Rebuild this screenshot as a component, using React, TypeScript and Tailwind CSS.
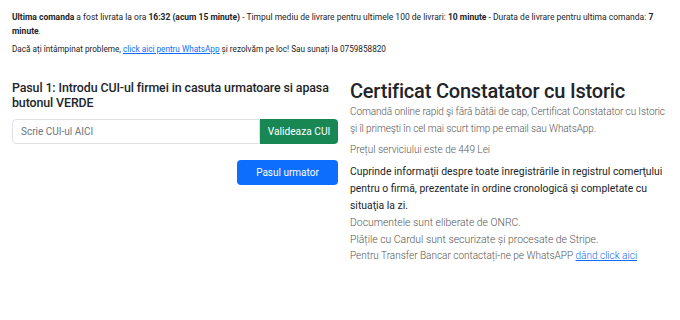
export default function App() {
	return (
		<div
			className="min-h-screen bg-white px-3 text-[#212529]"
			style={{ fontFamily: 'Roboto, "Open Sans", sans-serif' }}
		>
			<div className="pt-[10px] text-[8.5px] leading-[14px]">
				<p>
					<b>Ultima comanda</b> a fost livrata la ora <b>16:32 (acum 15 minute)</b> -
					Timpul mediu de livrare pentru ultimele 100 de livrari: <b>10 minute</b> -
					Durata de livrare pentru ultima comanda: <b>7 minute</b>.
				</p>
				<p className="mt-[4px] text-[8.2px]">
					Dacă ați întâmpinat probleme,{" "}
					<a href="#" className="text-[#0d6efd] underline">
						click aici pentru WhatsApp
					</a>{" "}
					și rezolvăm pe loc! Sau sunați la 0759858820
				</p>
			</div>

			<div className="mt-[24px] flex gap-3">
				<div className="w-[326px] shrink-0">
					<h5 className="text-[12.4px] font-medium leading-[15px] tracking-[-0.1px]">
						Pasul 1: Introdu CUI-ul firmei in casuta urmatoare si apasa butonul VERDE
					</h5>
					<div className="mt-[9px] flex h-[25px]">
						<input
							placeholder="Scrie CUI-ul AICI"
							className="min-w-0 flex-1 rounded-l-[4px] border border-[#dee2e6] px-[8px] text-[10px] placeholder:text-[#6c757d] outline-none"
						/>
						<button className="w-[78px] rounded-r-[4px] bg-[#198754] text-[10.2px] text-white">
							Valideaza CUI
						</button>
					</div>
					<div className="mt-[16px] flex justify-end">
						<button className="h-[25px] w-[101px] rounded-[4px] bg-[#0d6efd] text-[10px] text-white">
							Pasul urmator
						</button>
					</div>
				</div>

				<div className="flex-1">
					<h1 className="text-[20px] font-medium leading-[22px] tracking-[-0.2px]">
						Certificat Constatator cu Istoric
					</h1>
					<div className="mt-[2px] text-[10px] leading-[16.8px]">
						<p className="font-light tracking-[-0.1px] text-[#555]">
							Comandă online rapid şi fără bătăi de cap, Certificat Constatator cu Istoric
							şi îl primeşti în cel mai scurt timp pe email sau WhatsApp.
						</p>
						<p className="mt-[4px] font-light text-[#555]">Prețul serviciului este de 449 Lei</p>
						<p className="mt-[6px] text-[10.4px]">
							Cuprinde informaţii despre toate înregistrările în registrul comerţului pentru o
							firmă, prezentate în ordine cronologică şi completate cu situaţia la zi.
						</p>
						<p className="font-light text-[10.4px] text-[#555]">
							Documentele sunt eliberate de ONRC.
						</p>
						<p className="font-light text-[10.4px] text-[#555]">
							Plățile cu Cardul sunt securizate și procesate de Stripe.
						</p>
						<p className="font-light text-[#555]">
							Pentru Transfer Bancar contactați-ne pe WhatsAPP{" "}
							<a href="#" className="text-[#0d6efd] underline">
								dând click aici
							</a>
						</p>
					</div>
				</div>
			</div>
		</div>
	)
}
